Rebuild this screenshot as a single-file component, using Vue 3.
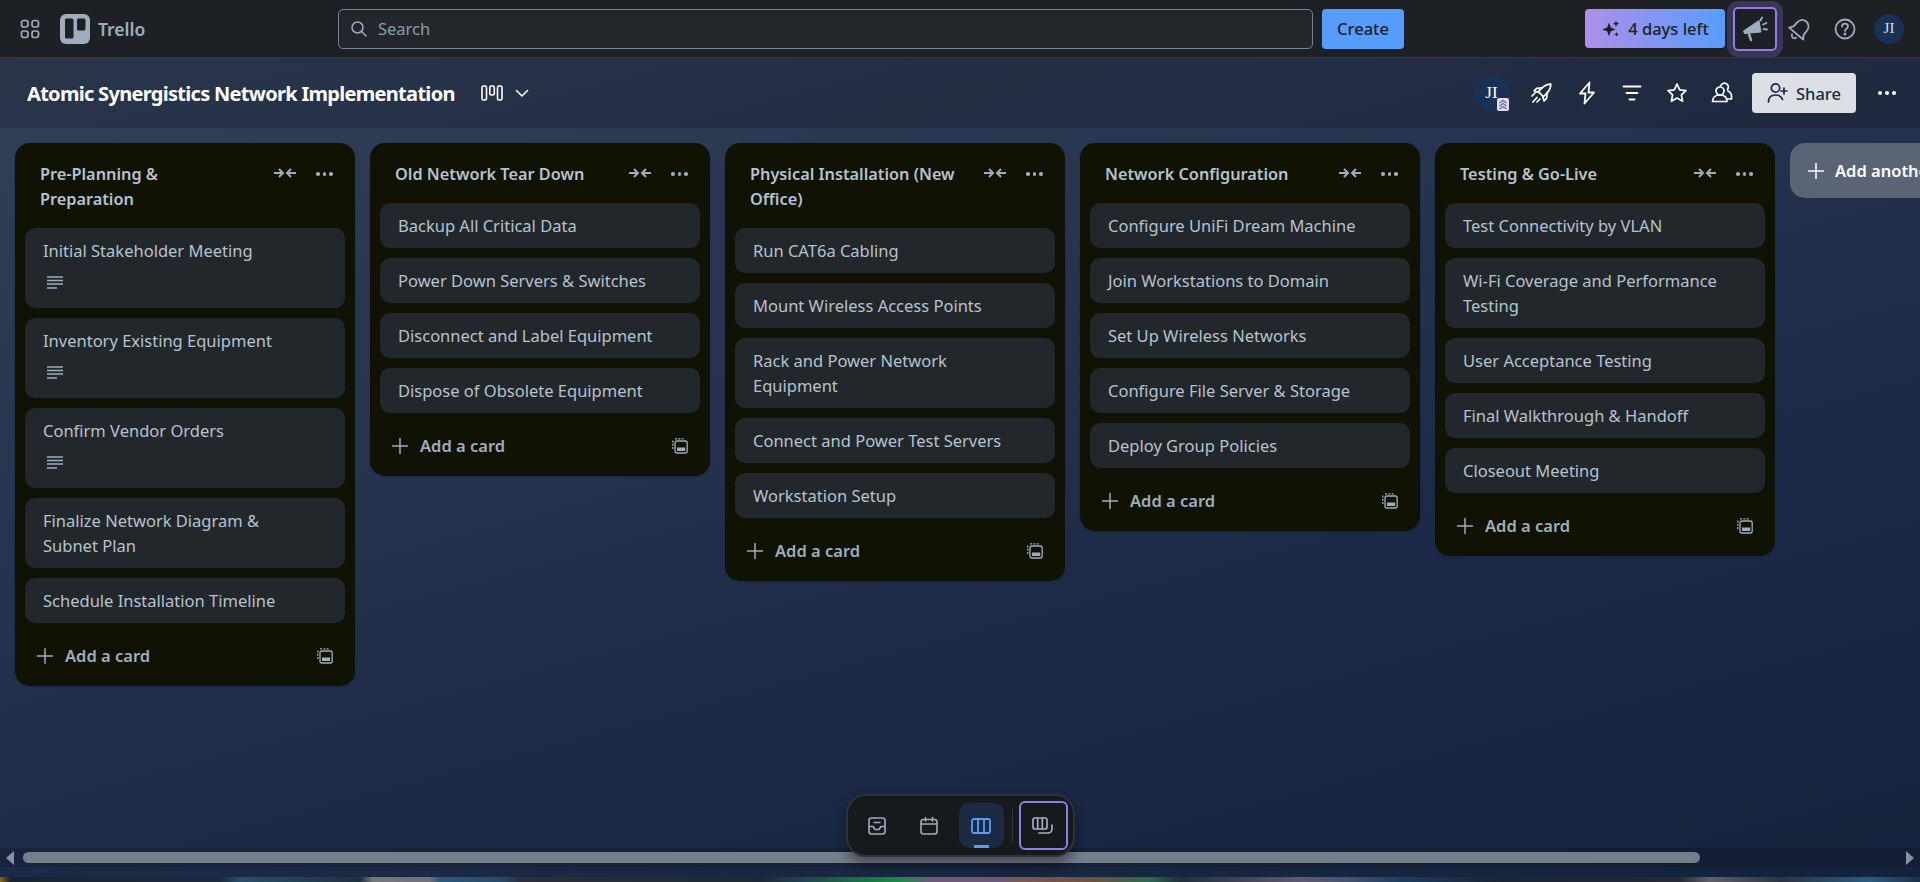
<script setup>
const lists = [
  { title: 'Pre-Planning & Preparation', cards: [
    { text: 'Initial Stakeholder Meeting', desc: true },
    { text: 'Inventory Existing Equipment', desc: true },
    { text: 'Confirm Vendor Orders', desc: true },
    { text: 'Finalize Network Diagram & Subnet Plan' },
    { text: 'Schedule Installation Timeline' },
  ] },
  { title: 'Old Network Tear Down', cards: [
    { text: 'Backup All Critical Data' },
    { text: 'Power Down Servers & Switches' },
    { text: 'Disconnect and Label Equipment' },
    { text: 'Dispose of Obsolete Equipment' },
  ] },
  { title: 'Physical Installation (New Office)', cards: [
    { text: 'Run CAT6a Cabling' },
    { text: 'Mount Wireless Access Points' },
    { text: 'Rack and Power Network Equipment' },
    { text: 'Connect and Power Test Servers' },
    { text: 'Workstation Setup' },
  ] },
  { title: 'Network Configuration', cards: [
    { text: 'Configure UniFi Dream Machine' },
    { text: 'Join Workstations to Domain' },
    { text: 'Set Up Wireless Networks' },
    { text: 'Configure File Server & Storage' },
    { text: 'Deploy Group Policies' },
  ] },
  { title: 'Testing & Go-Live', cards: [
    { text: 'Test Connectivity by VLAN' },
    { text: 'Wi-Fi Coverage and Performance Testing' },
    { text: 'User Acceptance Testing' },
    { text: 'Final Walkthrough & Handoff' },
    { text: 'Closeout Meeting' },
  ] },
]
</script>

<template>
  <div class="app">
    <header class="nav">
      <div class="nav-left">
        <svg class="grid-icon" width="20" height="20" viewBox="0 0 20 20" fill="none" stroke="#9fadbc" stroke-width="1.7">
          <rect x="1.5" y="1.5" width="6.5" height="6.5" rx="2.2" />
          <rect x="12" y="1.5" width="6.5" height="6.5" rx="2.2" />
          <rect x="1.5" y="12" width="6.5" height="6.5" rx="2.2" />
          <rect x="12" y="12" width="6.5" height="6.5" rx="2.2" />
        </svg>
        <svg width="30" height="30" viewBox="0 0 30 30">
          <rect width="30" height="30" rx="6" fill="#9fadbc" />
          <rect x="5" y="4.5" width="8.5" height="20" rx="1.5" fill="#1d2125" />
          <rect x="17" y="4.5" width="8.5" height="12" rx="1.5" fill="#1d2125" />
        </svg>
        <span class="brand">Trello</span>
      </div>
      <div class="search">
        <svg width="18" height="18" viewBox="0 0 18 18" fill="none" stroke="#9fadbc" stroke-width="1.5" stroke-linecap="round">
          <circle cx="7.5" cy="7.5" r="5.5" />
          <path d="M11.8 11.8L16 16" />
        </svg>
        <span>Search</span>
      </div>
      <button class="create">Create</button>
      <div class="nav-right">
        <button class="trial">
          <svg width="20" height="20" viewBox="0 0 20 20" fill="#1d2125">
            <path d="M8 3.5l1.9 5 4.8 1.9-4.8 1.9L8 17.300l-1.900-5-4.800-1.900 4.800-1.900z" />
            <path d="M15 1.500l.9 2.300 2.300.9-2.300.9-.9 2.300-.9-2.300-2.300-.9 2.300-.9z" />
            <path d="M15.500 13l.7 1.700 1.700.7-1.700.7-.7 1.700-.7-1.700-1.700-.7 1.700-.7z" />
          </svg>
          4 days left
        </button>
        <button class="mega">
          <svg width="26" height="26" viewBox="0 0 26 26" fill="#9fadbc">
            <path d="M1.500 15L17 4.500l2 11.500-16.500 1.500z" stroke="#9fadbc" stroke-linejoin="round" />
            <path d="M7 18l2 6" fill="none" stroke="#9fadbc" stroke-width="2.400" stroke-linecap="round" />
            <path d="M18.500 4.500l1.500-3M21 8.500l3.500-1.500M21.500 13l3.500.5" fill="none" stroke="#9fadbc" stroke-width="1.800" stroke-linecap="round" />
          </svg>
        </button>
        <button class="nav-icon">
          <svg width="26" height="26" viewBox="0 0 24 24" fill="none" stroke="#9fadbc" stroke-width="1.700" stroke-linejoin="round" stroke-linecap="round">
            <g transform="rotate(40 12 12)">
              <path d="M12 3c-4 0-6 3-6 7v4l-2.500 3.500h17L18 14v-4c0-4-2-7-6-7z" />
              <path d="M9.500 20.500a2.600 2.600 0 0 0 5 0" />
            </g>
          </svg>
        </button>
        <button class="nav-icon">
          <svg width="22" height="22" viewBox="0 0 22 22" fill="none" stroke="#9fadbc" stroke-width="1.800" stroke-linecap="round">
            <circle cx="11" cy="11" r="9.500" />
            <path d="M8 8.500c0-1.700 1.300-2.800 3-2.800s3 1 3 2.600c0 2.400-3 2.400-3 4.700" />
            <circle cx="11" cy="16" r=".6" />
          </svg>
        </button>
        <span class="avatar small">JI</span>
      </div>
    </header>

    <div class="board-bar">
      <h1>Atomic Synergistics Network Implementation</h1>
      <svg class="view-icon" width="22" height="18" viewBox="0 0 22 18" fill="none" stroke="#fff" stroke-width="1.600">
        <rect x="1" y="2" width="4.500" height="14" rx="1.500" />
        <rect x="8.800" y="2" width="4.500" height="9" rx="1.500" />
        <rect x="16.500" y="2" width="4.500" height="14" rx="1.500" />
      </svg>
      <svg class="chevron" width="16" height="16" viewBox="0 0 16 16" fill="none" stroke="#fff" stroke-width="1.600" stroke-linecap="round" stroke-linejoin="round">
        <path d="M2.500 5.500L8 11l5.500-5.500" />
      </svg>
      <div class="board-actions">
        <span class="avatar large">JI
          <svg class="admin-badge" width="12" height="13" viewBox="0 0 12 13">
            <rect width="12" height="13" rx="2" fill="#dcdfe4" />
            <path d="M2.500 5L6 2.500 9.500 5M2.500 8L6 5.500 9.500 8M2.500 11L6 8.500 9.500 11" fill="none" stroke="#6e5dc6" stroke-width="1.200" />
          </svg>
        </span>
        <button class="bar-icon">
          <svg width="24" height="24" viewBox="0 0 24 24" fill="none" stroke="#fff" stroke-width="1.700" stroke-linejoin="round" stroke-linecap="round">
            <g transform="rotate(45 13 11)">
              <path d="M13 0C9.500 3 9 8 9.500 14h7C17 8 16.500 3 13 0z" />
              <path d="M9.500 8.500L6 13v3.500l4-2M16.500 8.500L20 13v3.500l-4-2" />
            </g>
            <path d="M2 15l3-3M7 21l3-3M3 21l4-4.500" />
          </svg>
        </button>
        <button class="bar-icon">
          <svg width="22" height="24" viewBox="0 0 22 24" fill="none" stroke="#fff" stroke-width="1.800" stroke-linejoin="round" stroke-linecap="round">
            <path d="M13.500 1.500L4 12.500h5.500L8.500 22.500 18 11.500h-5.500z" />
          </svg>
        </button>
        <button class="bar-icon">
          <svg width="20" height="20" viewBox="0 0 20 20" fill="none" stroke="#fff" stroke-width="1.800" stroke-linecap="round">
            <path d="M1.500 3.500h17M4.500 10h11M7.500 16.500h5" />
          </svg>
        </button>
        <button class="bar-icon">
          <svg width="22" height="22" viewBox="0 0 22 22" fill="none" stroke="#fff" stroke-width="1.700" stroke-linejoin="round">
            <path d="M11 2l2.700 5.800 6.300.8-4.600 4.300 1.200 6.300L11 16.100l-5.600 3.100 1.200-6.300L2 8.600l6.300-.8z" />
          </svg>
        </button>
        <button class="bar-icon">
          <svg width="24" height="24" viewBox="0 0 24 24" fill="none" stroke="#fff" stroke-width="1.700" stroke-linejoin="round" stroke-linecap="round">
            <circle cx="10" cy="10" r="4" />
            <path d="M2.500 20.500c0-4 3-6.500 7.500-6.500s7 2.500 7 6.500z" />
            <path d="M10.500 5c1-2.500 3.500-3.500 5.500-2.500 2.500 1 3 4 1.500 6M18 10c2.500 1 4 4 3.500 8h-4" />
          </svg>
        </button>
        <button class="share">
          <svg width="22" height="22" viewBox="0 0 22 22" fill="none" stroke="#172b4d" stroke-width="1.700" stroke-linecap="round">
            <circle cx="8.500" cy="6" r="4.200" />
            <path d="M1.500 20c0-5 3-7 7-7s6 1.500 7 4.500M17 6v6M14 9h6" />
          </svg>
          Share
        </button>
        <button class="more" aria-label="More">
          <i></i><i></i><i></i>
        </button>
      </div>
    </div>

    <main class="canvas">
      <section v-for="list in lists" :key="list.title" class="list">
        <div class="list-head">
          <h2>{{ list.title }}</h2>
          <svg class="collapse" width="22" height="12" viewBox="0 0 22 12" fill="none" stroke="#9fadbc" stroke-width="2">
            <path d="M0 6h8M5 2l4 4-4 4" />
            <path d="M22 6h-8M17 2l-4 4 4 4" />
          </svg>
          <span class="dots"><i></i><i></i><i></i></span>
        </div>
        <div class="cards">
          <article v-for="card in list.cards" :key="card.text" class="card">
            <p>{{ card.text }}</p>
            <div v-if="card.desc" class="badges">
              <svg width="16" height="14" viewBox="0 0 16 14" fill="none" stroke="#9fadbc" stroke-width="1.400">
                <path d="M0 1h16M0 4.500h16M0 8h16M0 12h10" />
              </svg>
            </div>
          </article>
        </div>
        <div class="add-row">
          <svg width="18" height="18" viewBox="0 0 18 18" stroke="#9fadbc" stroke-width="1.500" stroke-linecap="round">
            <path d="M9 1.500v15M1.500 9h15" />
          </svg>
          <span>Add a card</span>
          <svg class="template" width="16" height="16" viewBox="0 0 16 16" fill="none" stroke="#9fadbc" stroke-width="1.300">
            <path d="M3 .8h9.500M.8 2.500v9" stroke-dasharray="2 1.300" />
            <rect x="3" y="3" width="12.200" height="12" rx="2" />
            <rect x="5" y="9.500" width="8.200" height="3.500" fill="#9fadbc" stroke="none" />
          </svg>
        </div>
      </section>
      <button class="add-list">
        <svg width="18" height="18" viewBox="0 0 18 18" stroke="#fff" stroke-width="1.500" stroke-linecap="round">
          <path d="M9 1.500v15M1.500 9h15" />
        </svg>
        Add another list
      </button>
    </main>

    <div class="scrollbar">
      <span class="arrow left"></span>
      <div class="track"><div class="thumb"></div></div>
      <span class="arrow right"></span>
    </div>
    <div class="strip"></div>

    <nav class="dock">
      <button class="dock-btn">
        <svg width="20" height="20" viewBox="0 0 20 20" fill="none" stroke="#9fadbc" stroke-width="1.600" stroke-linejoin="round">
          <rect x="2" y="2" width="16" height="16" rx="2.500" />
          <path d="M2 10.500h4l2 3h4l2-3h4M6.500 6.500h7" />
        </svg>
      </button>
      <button class="dock-btn">
        <svg width="20" height="20" viewBox="0 0 20 20" fill="none" stroke="#9fadbc" stroke-width="1.600" stroke-linecap="round">
          <rect x="2" y="3.500" width="16" height="14.500" rx="2.500" />
          <path d="M2 8h16M6.500 1.500v3.500M13.500 1.500v3.500" />
        </svg>
      </button>
      <button class="dock-btn active">
        <svg width="20" height="18" viewBox="0 0 20 18" fill="none" stroke="#579dff" stroke-width="1.800">
          <rect x="1" y="2" width="18" height="14" rx="2" />
          <path d="M7 2v14M13 2v14" />
        </svg>
      </button>
      <span class="dock-sep"></span>
      <button class="dock-btn switcher">
        <svg width="22" height="20" viewBox="0 0 22 20" fill="none" stroke="#9fadbc" stroke-width="1.700" stroke-linecap="round">
          <rect x="1" y="2" width="14" height="11" rx="2" />
          <path d="M5.700 2v11M10.300 2v11M20 9v4a4 4 0 0 1-4 4H7" />
        </svg>
      </button>
    </nav>
  </div>
</template>

<style>
html, body { margin: 0; background: #1c2a47; }
</style>

<style scoped>
.app {
  position: relative;
  width: 1920px;
  height: 882px;
  overflow: hidden;
  display: flex;
  flex-direction: column;
  font-family: "Noto Sans", "Open Sans", sans-serif;
  background: linear-gradient(165deg, #33415a 0%, #25324d 45%, #1c2a47 65%, #14233c 100%);
}
button { font-family: inherit; border: 0; background: none; padding: 0; cursor: pointer; }
h1, h2, p { margin: 0; }

.nav {
  height: 57px;
  flex: none;
  display: flex;
  align-items: center;
  background: #1d2125;
  border-bottom: 1px solid #31383f;
  box-sizing: content-box;
}
.nav-left { width: 338px; flex: none; display: flex; align-items: center; }
.grid-icon { margin: 0 20px 0 20px; }
.brand { margin-left: 8px; font-size: 17.5px; font-weight: 600; color: #9fadbc; }
.search {
  width: 975px;
  height: 40px;
  box-sizing: border-box;
  flex: none;
  display: flex;
  align-items: center;
  gap: 10px;
  padding-left: 11px;
  background: #22272b;
  border: 1px solid #738496;
  border-radius: 5px;
  font-size: 16.5px;
  color: #8c9bab;
}
.create {
  width: 82px;
  height: 40px;
  flex: none;
  margin-left: 9px;
  background: #579dff;
  border-radius: 4px;
  font-size: 16.5px;
  font-weight: 500;
  color: #1d2125;
}
.nav-right { margin-left: auto; padding-right: 16px; display: flex; align-items: center; }
.trial {
  width: 140px;
  height: 39px;
  display: flex;
  align-items: center;
  justify-content: center;
  gap: 7px;
  margin-right: 8px;
  border-radius: 4px;
  background: linear-gradient(90deg, #ae8fe8, #579dff);
  font-size: 16.5px;
  font-weight: 500;
  color: #1d2125;
}
.mega {
  width: 44px;
  height: 44px;
  box-sizing: border-box;
  display: flex;
  align-items: center;
  justify-content: center;
  border: 2px solid #8f7ee7;
  border-radius: 5px;
  box-shadow: 0 0 0 6px #3a3654;
}
.nav-icon { width: 45px; height: 40px; display: flex; align-items: center; justify-content: center; }
.avatar {
  display: flex;
  align-items: center;
  justify-content: center;
  border-radius: 50%;
  background: #1a3157;
  font-family: "Liberation Serif", serif;
  color: #dcdfe4;
}
.avatar.small { width: 30px; height: 30px; margin-left: 7px; font-size: 15px; }
.avatar.large { position: relative; width: 35px; height: 35px; margin-right: 10px; font-size: 17px; color: #fff; }
.admin-badge { position: absolute; right: 0; bottom: 0; }

.board-bar {
  height: 70px;
  flex: none;
  display: flex;
  align-items: center;
  padding-left: 27px;
  background: rgba(0, 0, 0, 0.16);
}
.board-bar h1 { font-size: 20px; font-weight: 700; letter-spacing: -0.7px; color: #fff; white-space: nowrap; }
.view-icon { margin-left: 26px; }
.chevron { margin-left: 11px; }
.board-actions { margin-left: auto; padding-right: 13px; display: flex; align-items: center; }
.bar-icon { width: 45px; height: 40px; display: flex; align-items: center; justify-content: center; }
.share {
  width: 104px;
  height: 40px;
  margin-left: 8px;
  display: flex;
  align-items: center;
  justify-content: center;
  gap: 7px;
  background: #dcdfe4;
  border-radius: 4px;
  font-size: 16.5px;
  font-weight: 500;
  color: #172b4d;
}
.more { width: 40px; height: 40px; margin-left: 11px; display: flex; align-items: center; justify-content: center; gap: 3px; }
.more i { width: 4px; height: 4px; border-radius: 50%; background: #fff; }

.canvas {
  flex: 1;
  min-height: 0;
  display: flex;
  align-items: flex-start;
  gap: 15px;
  padding: 15px 0 0 15px;
  overflow: hidden;
}
.list {
  width: 340px;
  flex: none;
  box-sizing: border-box;
  background: #101204;
  border-radius: 15px;
  box-shadow: 0 1px 2px rgba(9, 30, 66, 0.4);
}
.list-head { position: relative; display: flex; align-items: flex-start; padding: 19px 0 16px 25px; }
.list-head h2 { width: 212px; font-size: 16.3px; line-height: 25px; font-weight: 600; color: #b6c2cf; }
.collapse { position: absolute; top: 24px; left: 259px; }
.dots { position: absolute; top: 29px; left: 301px; display: flex; gap: 3px; }
.dots i { width: 3.5px; height: 3.5px; border-radius: 50%; background: #9fadbc; }

.cards { display: flex; flex-direction: column; gap: 10px; padding: 0 10px; }
.card {
  padding: 10px 31px 10px 18px;
  background: #22272b;
  border-radius: 10px;
  box-shadow: 0 1px 1px #091e4240;
}
.card p { font-size: 16.5px; line-height: 25px; color: #b6c2cf; }
.badges { height: 35px; box-sizing: border-box; padding: 13px 0 0 4px; display: flex; align-items: flex-start; }

.add-row { display: flex; align-items: center; height: 63px; padding: 2px 22px 0 21px; box-sizing: border-box; color: #9fadbc; }
.add-row span { margin-left: 11px; font-size: 16.5px; font-weight: 600; }
.add-row .template { margin-left: auto; }

.add-list {
  width: 340px;
  height: 55px;
  flex: none;
  display: flex;
  align-items: center;
  gap: 10px;
  padding-left: 17px;
  background: #5b6474;
  border-radius: 15px;
  font-size: 16.5px;
  font-weight: 600;
  color: #fff;
  white-space: nowrap;
}

.scrollbar { height: 19px; flex: none; display: flex; align-items: center; background: rgba(0, 0, 0, 0.14); padding: 0 6px; }
.arrow { width: 0; height: 0; border-top: 7px solid transparent; border-bottom: 7px solid transparent; }
.arrow.left { border-right: 8px solid #87909e; }
.arrow.right { border-left: 8px solid #87909e; }
.track { flex: 1; height: 11px; padding: 0 0 0 9px; }
.thumb { width: 1677px; height: 11px; border-radius: 6px; background: #757e8b; }
.strip {
  height: 5px;
  flex: none;
  margin-top: 10px;
  background: linear-gradient(90deg, #8a6a20 0, #1a2430 10px, #1c2a3c 220px, #2a5068 240px, #20303f 360px, #77787e 373px, #6f7078 430px, #2a5a78 440px, #2a4a68 500px, #2c2f3a 520px, #1d2a36 760px, #244052 800px, #1b7a42 875px, #1d8a48 900px, #6c5a78 930px, #6a5a78 1000px, #7a5a50 1020px, #70503f 1090px, #2b6a50 1150px, #20303c 1180px, #605870 1300px, #4a5670 1340px, #1f3c60 1400px, #1a2434 1500px, #262a38 1680px, #60606a 1710px, #2d3442 1780px, #2a5c80 1870px, #1f3148 1920px);
}

.dock {
  position: absolute;
  left: 846px;
  top: 794px;
  width: 229px;
  height: 63px;
  box-sizing: border-box;
  display: flex;
  align-items: center;
  padding-left: 6.5px;
  background: #161a1d;
  border: 2px solid #2c333a;
  border-radius: 20px;
  box-shadow: 0 8px 12px rgba(3, 4, 4, 0.36);
}
.dock-btn { position: relative; width: 45px; height: 45px; flex: none; margin-right: 7px; display: flex; align-items: center; justify-content: center; border-radius: 10px; }
.dock-btn.active { background: #1c2b41; margin-right: 0; }
.dock-btn.active::after {
  content: "";
  position: absolute;
  left: 15px;
  bottom: 0;
  width: 15px;
  height: 3px;
  background: #579dff;
}
.dock-sep { width: 1px; height: 33px; flex: none; margin: 0 6px 0 8px; background: #31383f; }
.dock-btn.switcher { width: 49px; height: 49px; box-sizing: border-box; margin: 0; border: 2px solid #8f7ee7; border-radius: 6px; }
</style>
